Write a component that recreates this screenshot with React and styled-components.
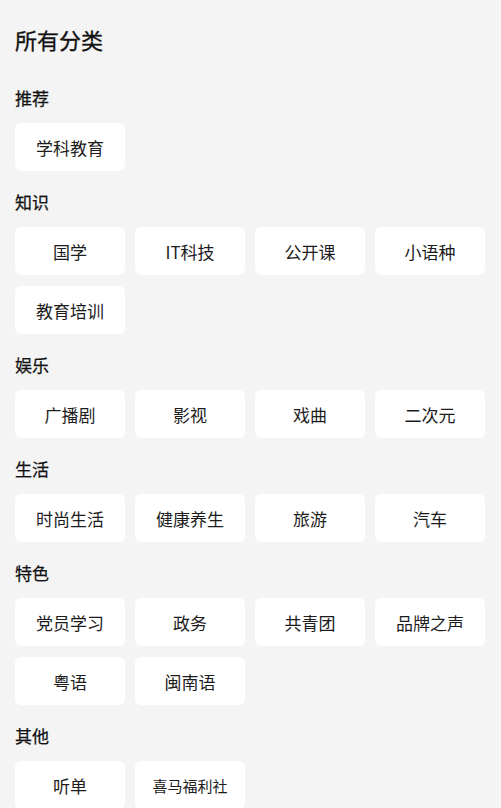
import React from 'react';
import styled, { createGlobalStyle } from 'styled-components';

const GlobalStyle = createGlobalStyle`
  html, body {
    margin: 0;
    padding: 0;
    background: #f4f4f4;
  }
  body {
    font-family: "Noto Sans CJK SC", "Noto Sans", sans-serif;
    color: #1a1a1a;
  }
`;

const categories = [
  { title: '推荐', items: ['学科教育'] },
  { title: '知识', items: ['国学', 'IT科技', '公开课', '小语种', '教育培训'] },
  { title: '娱乐', items: ['广播剧', '影视', '戏曲', '二次元'] },
  { title: '生活', items: ['时尚生活', '健康养生', '旅游', '汽车'] },
  { title: '特色', items: ['党员学习', '政务', '共青团', '品牌之声', '粤语', '闽南语'] },
  { title: '其他', items: ['听单', '喜马福利社'] },
];

const Page = styled.div`
  padding: 24px 15px 0 15px;
`;

const Title = styled.h1`
  margin: 0 0 13px 0;
  font-size: 22px;
  line-height: 30px;
  font-weight: 400;
  color: #111;
  -webkit-text-stroke: 0.3px #111;
`;

const Section = styled.section`
  padding-top: 19px;
`;

const Label = styled.h2`
  margin: 0 0 13px 0;
  font-size: 17px;
  line-height: 24px;
  font-weight: 400;
  color: #111;
  -webkit-text-stroke: 0.25px #111;
`;

const Grid = styled.div`
  display: grid;
  grid-template-columns: repeat(4, 110px);
  column-gap: 10px;
  row-gap: 11px;
`;

const Tag = styled.div`
  height: 48px;
  background: #ffffff;
  border-radius: 6px;
  display: flex;
  align-items: center;
  justify-content: center;
  font-size: ${props => (props.$small ? '15px' : '17px')};
  color: #1c1c1c;
  white-space: nowrap;
`;

export default function App() {
  return (
    <Page>
      <GlobalStyle />
      <Title>所有分类</Title>
      {categories.map(cat => (
        <Section key={cat.title}>
          <Label>{cat.title}</Label>
          <Grid>
            {cat.items.map(item => (
              <Tag key={item} $small={item.length > 4}>{item}</Tag>
            ))}
          </Grid>
        </Section>
      ))}
    </Page>
  );
}
